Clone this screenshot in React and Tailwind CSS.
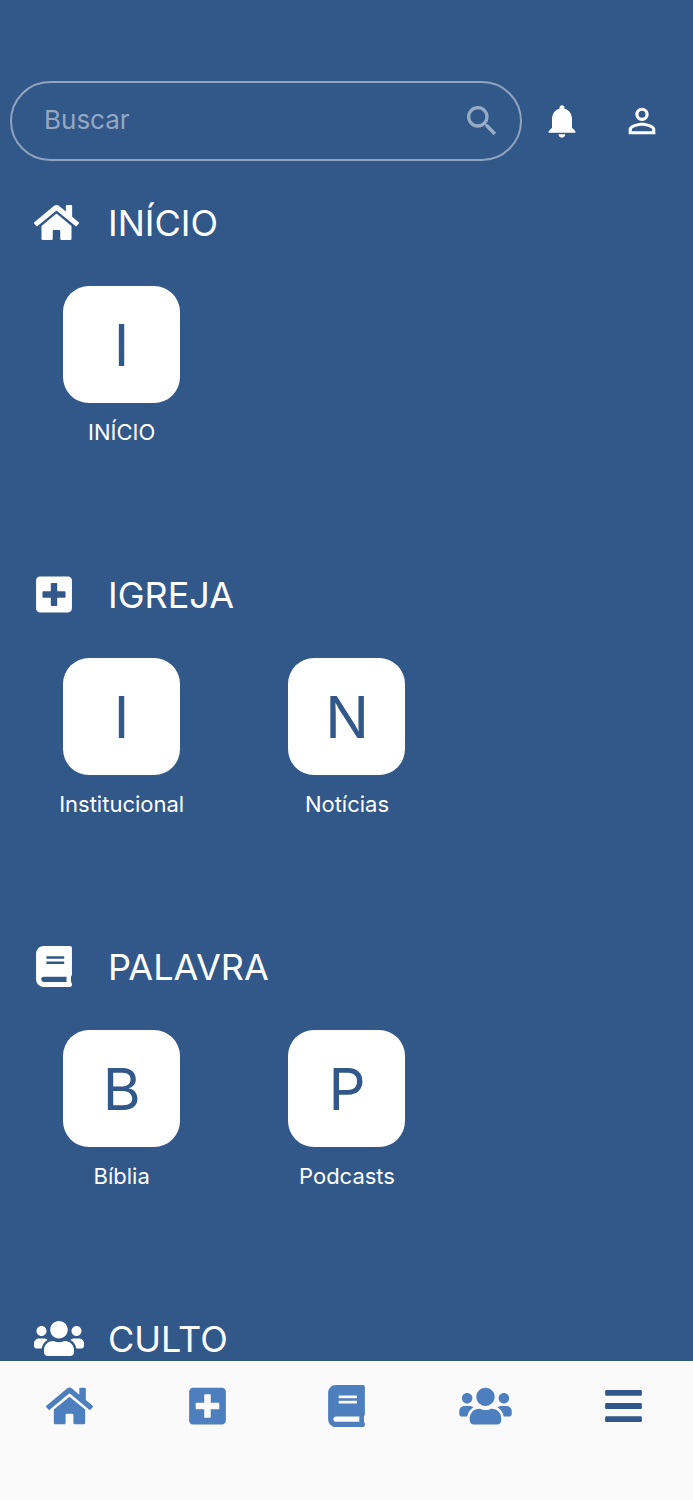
import React, { useState } from 'react';
import { FaBars, FaBook, FaHome, FaPlusSquare, FaUsers } from 'react-icons/fa';
import { MdNotifications, MdPersonOutline, MdSearch } from 'react-icons/md';

const SECTIONS = [
  { title: 'INÍCIO', icon: FaHome, iconClass: 'w-[45px]', items: ['INÍCIO'] },
  { title: 'IGREJA', icon: FaPlusSquare, iconClass: 'ml-0.5 w-[36px]', items: ['Institucional', 'Notícias'] },
  { title: 'PALAVRA', icon: FaBook, iconClass: 'ml-0.5 w-[36px]', items: ['Bíblia', 'Podcasts'] },
  { title: 'CULTO', icon: FaUsers, iconClass: 'w-[50px]', items: [] },
];

const TABS = [
  { label: 'Início', icon: FaHome, iconClass: 'w-[47px] text-[#4d7ebd]' },
  { label: 'Igreja', icon: FaPlusSquare, iconClass: 'w-[37px] text-[#4d7ebd]' },
  { label: 'Palavra', icon: FaBook, iconClass: 'w-[37px] text-[#4d7ebd]' },
  { label: 'Culto', icon: FaUsers, iconClass: 'w-[53px] text-[#4d7ebd]' },
  { label: 'Menu', icon: FaBars, iconClass: 'w-[37px] text-[#315888]' },
];

function SearchHeader() {
  const [query, setQuery] = useState('');

  return (
    <header className="flex shrink-0 items-center pt-[81px] pr-[11px] pl-2.5">
      <div className="flex h-20 min-w-0 flex-1 items-center rounded-full border-2 border-[#8ea4c1] pr-[18px] pl-8">
        <input
          type="text"
          aria-label="Buscar"
          placeholder="Buscar"
          value={query}
          onChange={(e) => setQuery(e.target.value)}
          className="h-full min-w-0 flex-1 bg-transparent pb-1 text-[26px] outline-none placeholder:text-[#93a8c4]"
        />
        <button type="button" aria-label="Pesquisar" className="text-[#98abc6]">
          <MdSearch className="size-10" />
        </button>
      </div>
      <button type="button" aria-label="Notificações" className="flex w-20 justify-center">
        <MdNotifications className="size-10" />
      </button>
      <button type="button" aria-label="Perfil" className="flex w-20 justify-center">
        <MdPersonOutline className="size-10" />
      </button>
    </header>
  );
}

function Tile({ label }) {
  return (
    <a href="#" className="flex flex-col items-center">
      <span className="flex size-[117px] items-center justify-center rounded-[26px] bg-white text-[58px] leading-none text-[#315888]">
        {label[0]}
      </span>
      <span className="mt-[15px] text-[22px] leading-7">{label}</span>
    </a>
  );
}

function Section({ title, icon: Icon, iconClass, items }) {
  return (
    <section className="pb-[111px]">
      <div className="flex h-[76px] items-center pl-[34px]">
        <div className="w-[74px] pb-0.5">
          <Icon className={`h-[41px] ${iconClass}`} aria-hidden="true" />
        </div>
        <h2 className="text-[36px] leading-none">{title}</h2>
      </div>
      <div className="grid grid-cols-3 pt-[25px] pr-2 pl-[9px]">
        {items.map((item) => (
          <Tile key={item} label={item} />
        ))}
      </div>
    </section>
  );
}

export default function App() {
  return (
    <div className="flex h-screen flex-col overflow-hidden bg-[#315888] font-['Inter',sans-serif] text-white">
      <SearchHeader />

      <main className="mt-6 min-h-0 flex-1 overflow-y-auto [scrollbar-width:none]">
        {SECTIONS.map((section) => (
          <Section key={section.title} {...section} />
        ))}
      </main>

      <nav className="grid shrink-0 grid-cols-5 bg-[#fafafa] pt-6 pb-[73px]">
        {TABS.map(({ label, icon: Icon, iconClass }) => (
          <button key={label} type="button" aria-label={label} className="flex justify-center">
            <Icon className={`h-[42px] ${iconClass}`} />
          </button>
        ))}
      </nav>
    </div>
  );
}
